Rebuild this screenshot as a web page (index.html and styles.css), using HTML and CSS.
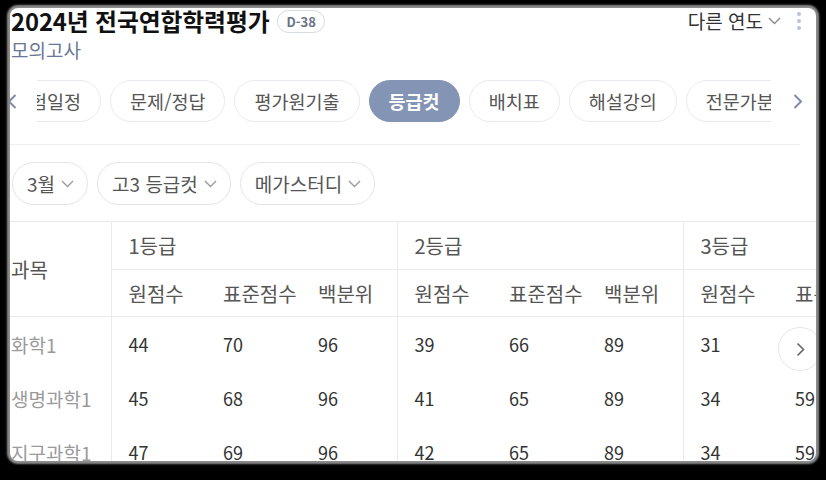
FILE: index.html
```html
<!DOCTYPE html>
<html lang="ko">
<head>
<meta charset="utf-8">
<title>2024년 전국연합학력평가</title>
<link rel="stylesheet" href="styles.css">
</head>
<body>
<div class="panel">
  <header class="head">
    <div class="title-wrap">
      <h1 class="title">2024년 전국연합학력평가</h1>
      <span class="badge">D-38</span>
    </div>
    <div class="head-right">
      <span class="year">다른 연도
        <svg width="13" height="8" viewBox="0 0 13 8"><path d="M1 1l5.5 5.5L12 1" fill="none" stroke="#8a8a8a" stroke-width="1.4"/></svg>
      </span>
      <span class="dots"><i></i><i></i><i></i></span>
    </div>
  </header>
  <div class="sub">모의고사</div>

  <nav class="tabs-row">
    <span class="arrow arrow-left"><svg width="10" height="15" viewBox="0 0 10 15"><path d="M8.5 1L2 7.5l6.5 6.5" fill="none" stroke="#7d8bb1" stroke-width="2"/></svg></span>
    <div class="viewport">
      <div class="track">
        <span class="tab">시험일정</span>
        <span class="tab">문제/정답</span>
        <span class="tab">평가원기출</span>
        <span class="tab active">등급컷</span>
        <span class="tab">배치표</span>
        <span class="tab">해설강의</span>
        <span class="tab">전문가분석</span>
      </div>
    </div>
    <span class="arrow arrow-right"><svg width="10" height="15" viewBox="0 0 10 15"><path d="M1.5 1L8 7.5 1.5 14" fill="none" stroke="#7d8bb1" stroke-width="2"/></svg></span>
  </nav>

  <div class="divider"></div>

  <div class="filters">
    <span class="filter">3월<svg width="13" height="8" viewBox="0 0 13 8"><path d="M1 1l5.5 5.5L12 1" fill="none" stroke="#9a9a9a" stroke-width="1.3"/></svg></span>
    <span class="filter">고3 등급컷<svg width="13" height="8" viewBox="0 0 13 8"><path d="M1 1l5.5 5.5L12 1" fill="none" stroke="#9a9a9a" stroke-width="1.3"/></svg></span>
    <span class="filter">메가스터디<svg width="13" height="8" viewBox="0 0 13 8"><path d="M1 1l5.5 5.5L12 1" fill="none" stroke="#9a9a9a" stroke-width="1.3"/></svg></span>
  </div>

  <div class="table-wrap">
    <table class="grade">
      <colgroup>
        <col class="c-subj">
        <col class="c-a"><col class="c-a"><col class="c-b">
        <col class="c-a"><col class="c-a"><col class="c-b">
        <col class="c-a"><col class="c-a"><col class="c-b">
      </colgroup>
      <thead>
        <tr class="r1">
          <th class="subj" rowspan="2">과목</th>
          <th class="grp" colspan="3">1등급</th>
          <th class="grp" colspan="3">2등급</th>
          <th class="grp" colspan="3">3등급</th>
        </tr>
        <tr class="r2">
          <th class="first">원점수</th><th>표준점수</th><th>백분위</th>
          <th class="first">원점수</th><th>표준점수</th><th>백분위</th>
          <th class="first">원점수</th><th>표준점수</th><th>백분위</th>
        </tr>
      </thead>
      <tbody>
        <tr>
          <td class="subj">화학1</td>
          <td class="first">44</td><td>70</td><td>96</td>
          <td class="first">39</td><td>66</td><td>89</td>
          <td class="first">31</td><td>60</td><td>78</td>
        </tr>
        <tr>
          <td class="subj">생명과학1</td>
          <td class="first">45</td><td>68</td><td>96</td>
          <td class="first">41</td><td>65</td><td>89</td>
          <td class="first">34</td><td>59</td><td>77</td>
        </tr>
        <tr>
          <td class="subj">지구과학1</td>
          <td class="first">47</td><td>69</td><td>96</td>
          <td class="first">42</td><td>65</td><td>89</td>
          <td class="first">34</td><td>59</td><td>76</td>
        </tr>
      </tbody>
    </table>
    <span class="more"><svg width="9" height="15" viewBox="0 0 9 15"><path d="M1.5 1.5L7.5 7.5 1.5 13.5" fill="none" stroke="#666" stroke-width="1.6"/></svg></span>
  </div>
</div>
</body>
</html>
```

FILE: styles.css
```css
html, body {
  margin: 0;
  padding: 0;
}

body {
  width: 826px;
  height: 480px;
  overflow: hidden;
  background: #000;
  font-family: "Noto Sans CJK KR", "Noto Sans", sans-serif;
}

.panel {
  margin: 8px 0 0 10px;
  width: 806px;
  height: 453px;
  background: #fff;
  border-radius: 8px;
  overflow: hidden;
  position: relative;
  box-shadow: 0 0 2px 3px #8c8c8c;
}

/* header */
.head {
  display: flex;
  justify-content: space-between;
  align-items: center;
  height: 26px;
  padding: 0 15px 0 1px;
}

.title-wrap {
  display: flex;
  align-items: center;
  gap: 8px;
}

.title {
  margin: 0;
  font-size: 23.8px;
  font-weight: 700;
  line-height: 26px;
  color: #111;
  letter-spacing: -0.1px;
}

.badge {
  height: 23px;
  box-sizing: border-box;
  padding: 0 8px;
  border: 1px solid #d6dae3;
  border-radius: 12px;
  font-size: 13px;
  font-weight: 700;
  line-height: 21px;
  color: #6b7385;
}

.head-right {
  display: flex;
  align-items: center;
}

.year {
  display: flex;
  align-items: center;
  gap: 5px;
  font-size: 19px;
  line-height: 24px;
  color: #333;
}

.dots {
  display: flex;
  flex-direction: column;
  gap: 3px;
  margin-left: 16px;
}

.dots i {
  display: block;
  width: 4px;
  height: 4px;
  border-radius: 50%;
  background: #b9c2d9;
}

.sub {
  margin-top: 4px;
  padding-left: 1px;
  font-size: 19px;
  line-height: 24px;
  color: #6a7896;
}

/* tabs */
.tabs-row {
  display: flex;
  align-items: center;
  height: 42px;
  margin-top: 18px;
}

.arrow {
  display: flex;
  align-items: center;
  flex: none;
}

.arrow-left {
  width: 27px;
}

.arrow-left svg {
  margin-left: -3px;
}

.arrow-right {
  margin-left: 22px;
}

.viewport {
  flex: none;
  width: 734px;
  overflow: hidden;
}

.track {
  display: flex;
  gap: 9px;
  margin-left: -44px;
}

.tab {
  flex: none;
  height: 42px;
  box-sizing: border-box;
  padding: 0 19px;
  border: 1px solid #e7e9ef;
  border-radius: 21px;
  font-size: 18.5px;
  line-height: 40px;
  color: #555;
  background: #fff;
  white-space: nowrap;
}

.tab.active {
  background: #8494b5;
  border-color: #8494b5;
  color: #fff;
  font-weight: 700;
}

.divider {
  height: 1px;
  background: #eeeeee;
  margin: 22px 16px 0 0;
}

/* filters */
.filters {
  display: flex;
  gap: 9px;
  margin-top: 17px;
  padding-left: 2px;
}

.filter {
  display: flex;
  align-items: center;
  gap: 6px;
  height: 43px;
  box-sizing: border-box;
  padding: 0 13px 0 14px;
  border: 1px solid #e4e4e4;
  border-radius: 22px;
  font-size: 19px;
  color: #555;
  white-space: nowrap;
}

/* table */
.table-wrap {
  margin-top: 16px;
  position: relative;
}

.grade {
  border-collapse: collapse;
  table-layout: fixed;
  width: 959px;
  border-top: 1px solid #e8e8e8;
}

.c-subj { width: 101px; }
.c-a { width: 95px; }
.c-b { width: 96px; }

.grade th,
.grade td {
  padding: 0 0 0 17px;
  text-align: left;
  font-weight: 400;
  white-space: nowrap;
  overflow: hidden;
}

.grade th {
  font-size: 20px;
  color: #555;
}

.grade .r1 th {
  height: 47px;
  border-bottom: 1px solid #ebebeb;
}

.grade .r1 th.grp {
  border-left: 1px solid #ebebeb;
}

.grade .r2 th {
  height: 46px;
  border-bottom: 1px solid #ebebeb;
}

.grade th.subj {
  padding-left: 1px;
  border-bottom: 1px solid #ebebeb;
}

.grade .first {
  border-left: 1px solid #ebebeb;
}

.grade td {
  height: 54px;
  font-size: 18px;
  color: #333;
}

.grade td.subj {
  padding-left: 1px;
  font-size: 19px;
  color: #9a9a9a;
}

.more {
  position: absolute;
  left: 768px;
  top: 106px;
  width: 44px;
  height: 44px;
  box-sizing: border-box;
  border: 1px solid #e6e6e6;
  border-radius: 50%;
  background: #fff;
  display: flex;
  align-items: center;
  justify-content: center;
}
```
